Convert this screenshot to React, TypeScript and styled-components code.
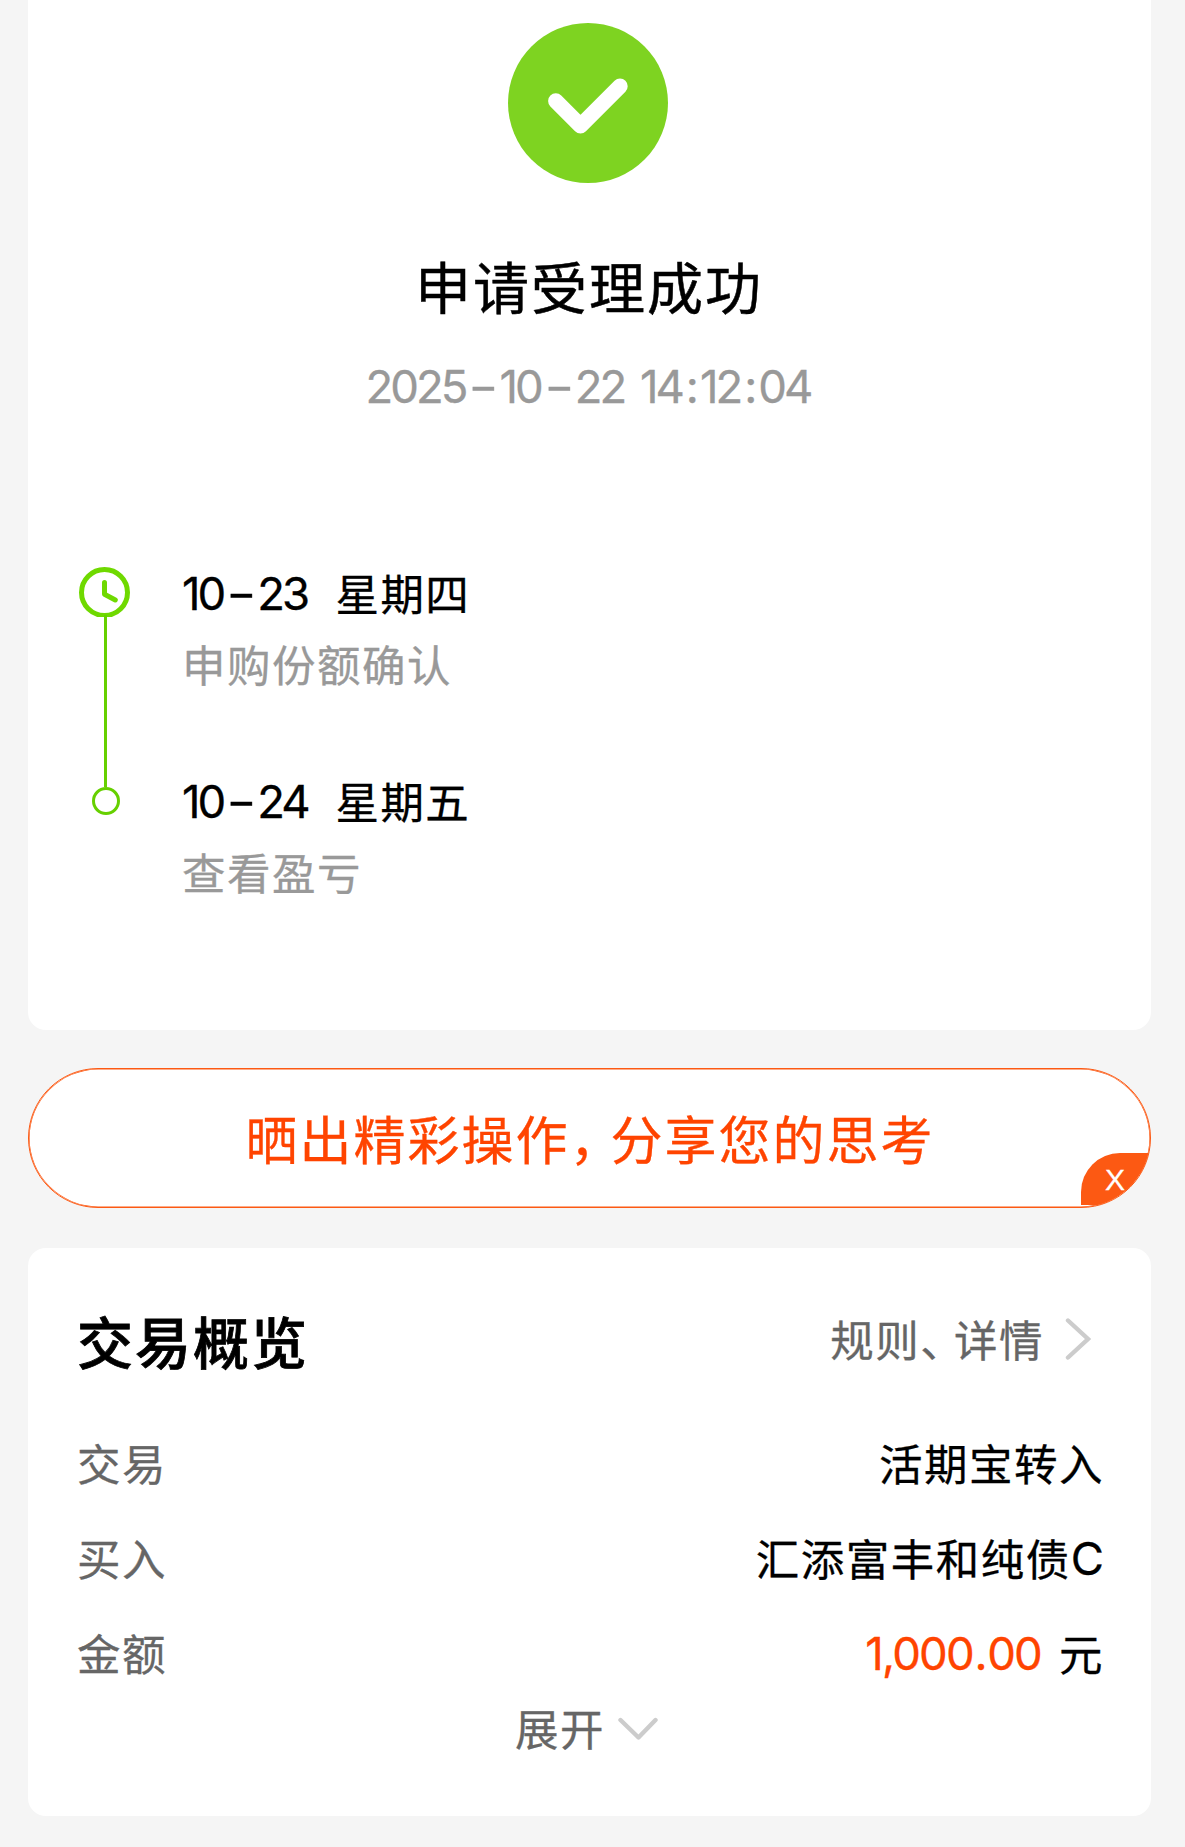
import React from "react";
import styled, { createGlobalStyle } from "styled-components";

const GlobalStyle = createGlobalStyle`
  * { box-sizing: border-box; }
  body {
    margin: 0;
    background: #f5f5f5;
    font-family: Inter, "Noto Sans CJK SC", sans-serif;
    color: #000;
    -webkit-text-stroke: 0.3px currentColor;
  }
`;

const Page = styled.main`
  width: 1185px;
  height: 1847px;
  padding: 0 34px 0 28px;
  display: flex;
  flex-direction: column;
  background: #f5f5f5;
  overflow: hidden;
`;

const ResultCard = styled.section`
  height: 1030px;
  padding: 23px 3px 0 0;
  background: #fff;
  border-radius: 0 0 18px 18px;
  display: flex;
  flex-direction: column;
  align-items: center;
`;

const SuccessIcon = styled.svg`
  width: 160px;
  height: 160px;
  flex: none;
`;

const ResultTitle = styled.h1`
  margin: 66px 0 0;
  font-size: 56px;
  font-weight: 400;
  line-height: 80px;
  letter-spacing: 2px;
  padding-left: 2px;
  -webkit-text-stroke: 0.5px #000;
`;

const ResultTime = styled.time`
  margin-top: 28px;
  font-size: 45.5px;
  line-height: 60px;
  letter-spacing: -3px;
  word-spacing: 6px;
  color: #999;
`;

const Dash = styled.span`
  display: inline-block;
  width: 34px;
  text-align: center;
  letter-spacing: 0;
  transform: translateX(-2px) scaleX(1.5);
  transform: translateX(1.5px) scaleX(1.45);
`;

const Colon = styled.span`
  margin: 0 4px;
`;

const Steps = styled.ol`
  list-style: none;
  align-self: stretch;
  margin: 147px 0 0;
  padding: 0 50px;
`;

const Step = styled.li`
  display: flex;
  height: 208px;
`;

const Rail = styled.div`
  width: 104px;
  display: flex;
  flex-direction: column;
  align-items: flex-start;
`;

const StepBody = styled.div`
  padding-top: 2px;
`;

const ClockIcon = styled.svg`
  width: 53px;
  height: 53px;
  flex: none;
`;

const Connector = styled.div`
  width: 3px;
  height: 172px;
  margin: -2px 0 0 26px;
  flex: none;
  background: #66d000;
`;

const Dot = styled.div`
  width: 28px;
  height: 28px;
  margin: 15px 0 0 14px;
  border: 3px solid #66d000;
  border-radius: 50%;
  background: #fff;
  z-index: 1;
`;

const StepDate = styled.div`
  display: flex;
  line-height: 56px;
  font-size: 45.5px;
  letter-spacing: -3px;
`;

const DateNumber = styled.span`
  width: 153.5px;
  white-space: nowrap;
`;

const Weekday = styled.span`
  padding-top: 1px;
  font-size: 43.5px;
  letter-spacing: 1.4px;
`;

const StepNote = styled.div`
  margin-top: 15px;
  line-height: 56px;
  font-size: 43.5px;
  letter-spacing: 1.5px;
  color: #999;
`;

const ShareButton = styled.div`
  position: relative;
  height: 140px;
  margin-top: 38px;
  padding: 0 0 2px 1px;
  flex: none;
  border: 1px solid #fc5913;
  border-radius: 70px;
  background: #fff;
  box-shadow: inset 0 0 0 0.6px #fc5913;
  overflow: hidden;
  display: flex;
  align-items: center;
  justify-content: center;
  font-size: 52px;
  letter-spacing: 2px;
  color: #ff4400;
`;

const Punctuation = styled.span<{ $after: number }>`
  margin-right: ${(p) => p.$after}px;
  font-feature-settings: "halt";
`;

const CloseBadge = styled.button`
  position: absolute;
  right: -1px;
  bottom: 2px;
  width: 70px;
  height: 52px;
  padding: 2px 0 0 24px;
  border: 0;
  border-radius: 39px 0 0 0;
  background: #fc5913;
  color: #fff;
  font: 30px/48px "Liberation Sans", sans-serif;
  text-align: left;
`;

const SummaryCard = styled.section`
  height: 568px;
  margin-top: 40px;
  padding: 54px 47px 0 49px;
  background: #fff;
  border-radius: 18px;
  flex: none;
`;

const SummaryHeader = styled.header`
  height: 80px;
  margin-bottom: 33px;
  display: flex;
  align-items: center;
  justify-content: space-between;
`;

const SummaryTitle = styled.h2`
  margin: 3px 0 0;
  font-size: 56px;
  font-weight: 500;
  line-height: 80px;
  letter-spacing: 2px;
  -webkit-text-stroke: 0.8px #000;
`;

const DetailLink = styled.div`
  display: flex;
  align-items: center;
  font-size: 43.5px;
  line-height: 60px;
  letter-spacing: 1.5px;
  color: #666;
  margin: -2px 13px 0 0;
`;

const RightChevron = styled.svg`
  width: 26px;
  height: 44px;
  margin: -5px 0 0 21px;
`;

const Row = styled.div`
  height: 95px;
  display: flex;
  align-items: center;
  justify-content: space-between;
  font-size: 43.5px;
  letter-spacing: 1.5px;
`;

const Label = styled.span`
  color: #666;
`;

const Value = styled.span`
  display: flex;
  align-items: center;
`;

const FundClass = styled.span`
  padding-top: 2px;
  font-size: 45.5px;
  letter-spacing: 0;
`;

const Amount = styled.span`
  padding-top: 2px;
  margin-right: 18px;
  font-size: 45.5px;
  letter-spacing: -1.8px;
  color: #ff4400;
`;

const DecimalPoint = styled.span`
  margin: 0 1.5px;
`;

const Expand = styled.div`
  height: 60px;
  margin-top: -3px;
  padding-right: 8px;
  display: flex;
  align-items: center;
  justify-content: center;
  font-size: 43.5px;
  letter-spacing: 1.5px;
  color: #666;
`;

const DownChevron = styled.svg`
  width: 40px;
  height: 24px;
  margin: 3px 0 0 13px;
`;

const MonthDay = ({ month, day }: { month: string; day: string }) => (
  <>{month}<Dash>-</Dash>{day}</>
);

export default function App() {
  return (
    <>
      <GlobalStyle />
      <Page>
        <ResultCard>
          <SuccessIcon viewBox="0 0 160 160">
            <circle cx="80" cy="80" r="80" fill="#7ed321" />
            <path d="M47.8 78 72.5 102.7 112 63.3" fill="none" stroke="#fff" strokeWidth="15.4" strokeLinecap="round" strokeLinejoin="round" />
          </SuccessIcon>
          <ResultTitle>申请受理成功</ResultTitle>
          <ResultTime>2025<Dash>-</Dash>10<Dash>-</Dash>22 14<Colon>:</Colon>12<Colon>:</Colon>04</ResultTime>
          <Steps>
            <Step>
              <Rail>
                <ClockIcon viewBox="0 0 53 53" fill="none" stroke="#6fd900" strokeWidth="5">
                  <circle cx="26.5" cy="28.5" r="23" />
                  <path d="M26.5 18.5v11.7l10.8 5.8" strokeLinecap="round" strokeLinejoin="round" />
                </ClockIcon>
                <Connector />
              </Rail>
              <StepBody>
                <StepDate>
                  <DateNumber><MonthDay month="10" day="23" /></DateNumber>
                  <Weekday>星期四</Weekday>
                </StepDate>
                <StepNote>申购份额确认</StepNote>
              </StepBody>
            </Step>
            <Step>
              <Rail><Dot /></Rail>
              <StepBody>
                <StepDate>
                  <DateNumber><MonthDay month="10" day="24" /></DateNumber>
                  <Weekday>星期五</Weekday>
                </StepDate>
                <StepNote>查看盈亏</StepNote>
              </StepBody>
            </Step>
          </Steps>
        </ResultCard>

        <ShareButton>
          <span>晒出精彩操作<Punctuation $after={13}>，</Punctuation>分享您的思考</span>
          <CloseBadge>X</CloseBadge>
        </ShareButton>

        <SummaryCard>
          <SummaryHeader>
            <SummaryTitle>交易概览</SummaryTitle>
            <DetailLink>
              <span>规则<Punctuation $after={10.5}>、</Punctuation>详情</span>
              <RightChevron viewBox="0 0 26 44" fill="none" stroke="#ccc" strokeWidth="4.4">
                <path d="M3 3.5 23 22 3 40.5" strokeLinecap="round" />
              </RightChevron>
            </DetailLink>
          </SummaryHeader>
          <Row><Label>交易</Label><Value>活期宝转入</Value></Row>
          <Row><Label>买入</Label><Value>汇添富丰和纯债<FundClass>C</FundClass></Value></Row>
          <Row><Label>金额</Label><Value><Amount>1,000<DecimalPoint>.</DecimalPoint>00</Amount>元</Value></Row>
          <Expand>
            展开
            <DownChevron viewBox="0 0 40 24" fill="none" stroke="#ccc" strokeWidth="4.4">
              <path d="M2.5 3 20.5 20.5 37.5 3" strokeLinecap="round" strokeLinejoin="round" />
            </DownChevron>
          </Expand>
        </SummaryCard>
      </Page>
    </>
  );
}
